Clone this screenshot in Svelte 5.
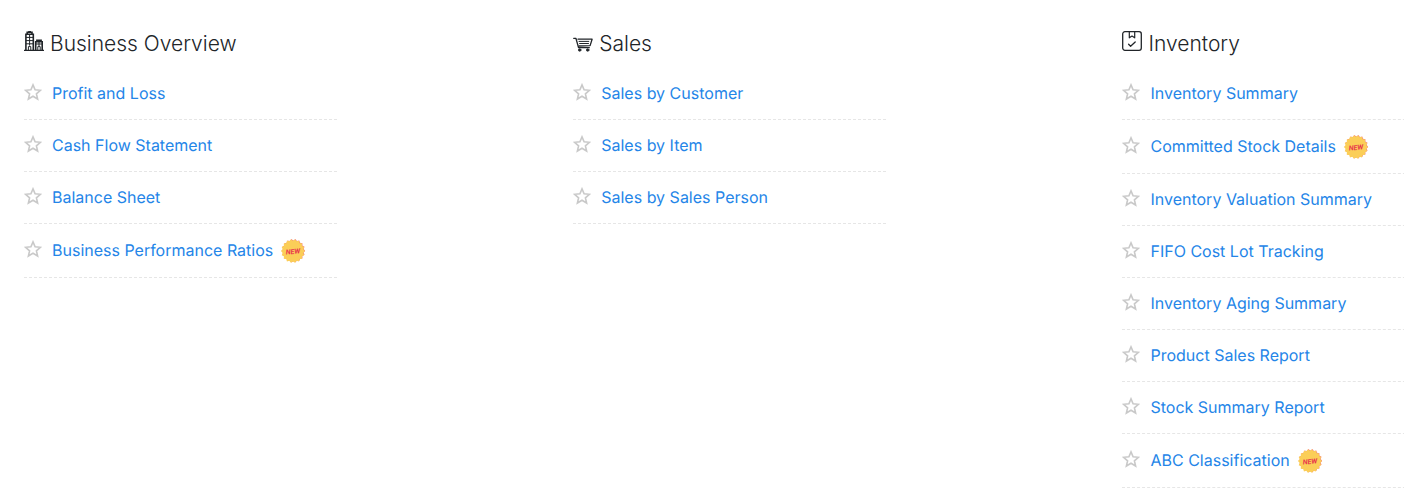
<script>
  const groups = [
    {
      title: 'Business Overview',
      icon: 'building',
      reports: [
        { name: 'Profit and Loss' },
        { name: 'Cash Flow Statement' },
        { name: 'Balance Sheet' },
        { name: 'Business Performance Ratios', fresh: true }
      ]
    },
    {
      title: 'Sales',
      icon: 'cart',
      reports: [
        { name: 'Sales by Customer' },
        { name: 'Sales by Item' },
        { name: 'Sales by Sales Person' }
      ]
    },
    {
      title: 'Inventory',
      icon: 'box',
      reports: [
        { name: 'Inventory Summary' },
        { name: 'Committed Stock Details', fresh: true },
        { name: 'Inventory Valuation Summary' },
        { name: 'FIFO Cost Lot Tracking' },
        { name: 'Inventory Aging Summary' },
        { name: 'Product Sales Report' },
        { name: 'Stock Summary Report' },
        { name: 'ABC Classification', fresh: true }
      ]
    }
  ];

  // Outline of the scalloped badge, alternating between two radii.
  const teeth = 18;
  const seal = Array.from({ length: teeth * 2 }, (_, i) => {
    const r = i % 2 ? 10.4 : 11.9;
    const a = (Math.PI * i) / teeth;
    return `${(12 + r * Math.cos(a)).toFixed(2)},${(12 + r * Math.sin(a)).toFixed(2)}`;
  }).join(' ');
</script>

<main class="reports">
  {#each groups as group}
    <section class="group">
      <h2 class="title">
        {#if group.icon === 'building'}
          <svg class="icon raised" viewBox="0 0 20 20" fill="none" stroke="#212529" aria-hidden="true">
            <path d="M0 19.4h20" stroke-width="1.3" />
            <path d="M1.9 19V3.2h7.4V19M3.2 3V1.2h4.8V3M4.2.6h2.8" stroke-width="1.6" />
            <path d="M5.6 4v10.6M2 6.4h7.3M2 9.6h7.3M2 12.8h7.3M4.4 19v-3.4h2.4V19" stroke-width="1" />
            <path d="M11.7 19v-8.2h6.5V19M12.9 10.6V9.4h4.2v1.2" stroke-width="1.6" />
            <path d="M15 11v4M12 13h6M13.8 19v-3.4h2.4V19" stroke-width="1" />
          </svg>
        {:else if group.icon === 'cart'}
          <svg class="icon" viewBox="0 0 20 20" fill="none" stroke="#212529" stroke-linecap="round" stroke-linejoin="round" aria-hidden="true">
            <path d="M.7 4.3h2.2l2.7 9.4h10.7" stroke-width="1.3" />
            <path d="M5 5.2h14.1l-2 6.4-11 .4" stroke-width="1.3" />
            <path d="M6 7.4h9.8M6.6 9.5h8.9" stroke-width="1" />
            <circle cx="6.7" cy="16" r="1.3" fill="#212529" stroke-width=".7" />
            <circle cx="14.7" cy="16" r="1.3" fill="#212529" stroke-width=".7" />
          </svg>
        {:else}
          <svg class="icon raised" viewBox="0 0 20 20" fill="none" stroke="#212529" stroke-linecap="round" stroke-linejoin="round" aria-hidden="true">
            <rect x=".7" y=".7" width="18.6" height="18.6" rx="2.2" stroke-width="1.3" />
            <path d="M7.3.8v6L10 5l2.7 1.8v-6" stroke-width="1.2" />
            <path d="M6.6 13.2l2 2 4.6-4.2" stroke-width="1.3" />
          </svg>
        {/if}
        {group.title}
      </h2>
      <ul class="list">
        {#each group.reports as report}
          <li class="row">
            <button class="star" type="button" aria-label="Favorite {report.name}">
              <svg viewBox="0 0 18 18" fill="none" stroke="#c9c9c9" stroke-width="1.6" stroke-linejoin="miter" aria-hidden="true">
                <path d="M9 1.9l2.1 4.9 5.3.5-4 3.5 1.2 5.2L9 13.2 4.4 16l1.2-5.2-4-3.5 5.3-.5z" />
              </svg>
            </button>
            <a class="link" href="#report">{report.name}</a>
            {#if report.fresh}
              <svg class="badge" viewBox="0 0 24 24" role="img" aria-label="New">
                <polygon points={seal} fill="#f58a78" transform="translate(.4 -.2)" />
                <polygon points={seal} fill="#fbce58" transform="translate(-.1 .1)" />
                <text x="12" y="15" text-anchor="middle" transform="rotate(-5 12 12)">NEW</text>
              </svg>
            {/if}
          </li>
        {/each}
      </ul>
    </section>
  {/each}
</main>

<style>
  :global(body) {
    margin: 0;
    background: #fff;
  }

  .reports {
    display: flex;
    padding: 28px 0 8px 24px;
    overflow: hidden;
    font-family: Inter, "Liberation Sans", sans-serif;
  }

  .group {
    flex: 0 0 39.8%;
  }

  .title {
    display: flex;
    align-items: center;
    gap: 6px;
    margin: 0 0 8px;
    color: #212529;
    font-size: 21px;
    font-weight: 300;
    line-height: 32px;
  }

  .icon {
    flex: none;
    width: 20px;
    height: 20px;
  }

  .raised {
    margin-bottom: 6px;
  }

  .list {
    width: 57%;
    margin: 0;
    padding: 0;
    list-style: none;
    text-rendering: geometricPrecision;
  }

  .row {
    display: flex;
    align-items: center;
    padding: 14px 0;
    border-bottom: 1px dashed #e6e6e6;
    line-height: 23px;
    white-space: nowrap;
  }

  .star {
    flex: none;
    width: 18px;
    height: 18px;
    margin: 0 10px 4px 0;
    padding: 0;
    border: 0;
    background: none;
    cursor: pointer;
  }

  .star svg {
    display: block;
  }

  .link {
    color: #2485e8;
    font-size: 16px;
    text-decoration: none;
  }

  .link:hover {
    text-decoration: underline;
  }

  .badge {
    flex: none;
    width: 24px;
    height: 24px;
    margin: 1px 0 0 8px;
  }

  .badge text {
    fill: #e8384d;
    font-family: Roboto, sans-serif;
    font-size: 7px;
    font-style: italic;
    font-weight: 700;
  }
</style>
